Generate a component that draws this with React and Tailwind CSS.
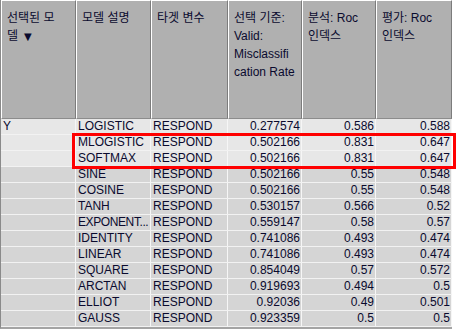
import React from "react";

const cols = [75, 75, 77, 74, 74, 76];

const rows = [
  ["Y", "LOGISTIC", "RESPOND", "0.277574", "0.586", "0.588"],
  ["", "MLOGISTIC", "RESPOND", "0.502166", "0.831", "0.647"],
  ["", "SOFTMAX", "RESPOND", "0.502166", "0.831", "0.647"],
  ["", "SINE", "RESPOND", "0.502166", "0.55", "0.548"],
  ["", "COSINE", "RESPOND", "0.502166", "0.55", "0.548"],
  ["", "TANH", "RESPOND", "0.530157", "0.566", "0.52"],
  ["", "EXPONENT...", "RESPOND", "0.559147", "0.58", "0.57"],
  ["", "IDENTITY", "RESPOND", "0.741086", "0.493", "0.474"],
  ["", "LINEAR", "RESPOND", "0.741086", "0.493", "0.474"],
  ["", "SQUARE", "RESPOND", "0.854049", "0.57", "0.572"],
  ["", "ARCTAN", "RESPOND", "0.919693", "0.494", "0.5"],
  ["", "ELLIOT", "RESPOND", "0.92036", "0.49", "0.501"],
  ["", "GAUSS", "RESPOND", "0.923359", "0.5", "0.5"],
];

const headers = [
  ["선택된 모", "델 ▼"],
  ["모델 설명"],
  ["타겟 변수"],
  ["선택 기준:", "Valid:", "Misclassifi", "cation Rate"],
  ["분석: Roc", "인덱스"],
  ["평가: Roc", "인덱스"],
];

export default function App() {
  return (
    <div className="relative w-[458px] h-[330px] bg-white overflow-hidden font-['Liberation_Sans','Noto_Sans_CJK_KR',sans-serif] text-[12px] text-[#0a0a2e]">
      <div className="w-[452px] border-l border-[#8a8a8a] border-b-2 border-b-[#a4a4a4]">
        {/* header */}
        <div className="flex h-[119px]">
          {headers.map((lines, i) => (
            <div
              key={i}
              style={{ width: cols[i] }}
              className="shrink-0 bg-[#b0b0b0] border-t border-l border-white border-r border-r-[#7c7c7c] border-b border-b-[#8c8c8c] pl-[5px] pt-[8px] leading-[18px]"
            >
              {lines.map((l, j) => (
                <div key={j} className="whitespace-nowrap">
                  {l.endsWith("▼") ? (
                    <>
                      델<span className="ml-[6px] text-[10px] font-['DejaVu_Sans',sans-serif]">▼</span>
                    </>
                  ) : (
                    l
                  )}
                </div>
              ))}
            </div>
          ))}
        </div>

        {/* body */}
        {rows.map((r, ri) => (
          <div
            key={ri}
            className={
              "flex h-[16px] border-b border-[#f2f2f2] " +
              (ri < 3 ? "bg-[#e7e7e7]" : "bg-[#d5d5d5]")
            }
          >
            {r.map((c, ci) => (
              <div
                key={ci}
                style={{ width: cols[ci] }}
                className={
                  "shrink-0 overflow-hidden whitespace-nowrap leading-[15px] border-r border-[#f6f6f6] " +
                  (ci >= 3 ? "text-right pr-[1px]" : "pl-[2px]") +
                  (c.endsWith("...") ? " tracking-[-0.4px]" : "")
                }
              >
                {c}
              </div>
            ))}
          </div>
        ))}
      </div>

      {/* selection highlight */}
      <div className="absolute left-[72px] top-[133px] w-[384px] h-[36px] border-[3px] border-[#ff0000]" />
    </div>
  );
}
